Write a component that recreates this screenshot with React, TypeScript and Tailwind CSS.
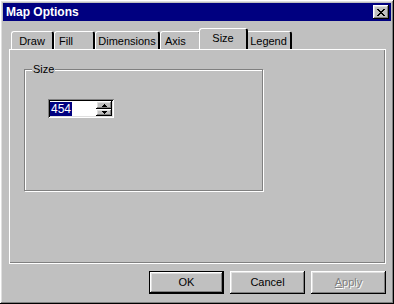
import React from "react";

const raised =
  "shadow-[inset_-1px_-1px_#000,inset_1px_1px_#fff,inset_-2px_-2px_#808080,inset_2px_2px_#dfdfdf]";

const Tab = ({ label, w, active }: { label: string; w: string; active?: boolean }) => (
  <div
    className={`relative flex justify-center bg-[#c0c0c0] border-t border-l border-white rounded-tl-[3px] rounded-tr-[3px] border-r-2 border-r-black ${w} ${
      active ? "h-[21px] -mx-[2px] z-10 pt-[2px]" : "h-[18px] pt-[2px]"
    }`}
  >
    <span className="leading-[14px]">{label}</span>
  </div>
);

const Button = ({ label, def, disabled }: { label: string; def?: boolean; disabled?: boolean }) => (
  <div
    className={`w-[75px] h-[23px] flex items-center justify-center ${
      def ? "border border-black" : ""
    }`}
  >
    <div className={`w-full h-full flex items-center justify-center ${raised}`}>
      {disabled ? (
        <span className="text-[#808080] [text-shadow:1px_1px_#fff]">
          <u>A</u>pply
        </span>
      ) : (
        <span>{label}</span>
      )}
    </div>
  </div>
);

export default function App() {
  return (
    <div
      className={`w-[394px] h-[304px] bg-[#c0c0c0] p-[3px] text-[11px] text-black ${raised}`}
      style={{ fontFamily: '"Liberation Sans", Arial, sans-serif' }}
    >
      {/* title bar */}
      <div className="h-[18px] bg-[#000080] flex items-center justify-between pl-[3px] pr-[2px]">
        <span className="text-white font-bold text-[12px] leading-none">Map Options</span>
        <div className={`w-[16px] h-[14px] bg-[#c0c0c0] flex items-center justify-center ${raised}`}>
          <svg width="8" height="7" viewBox="0 0 8 7" shapeRendering="crispEdges">
            <path d="M0 0h2v1h-2zM6 0h2v1h-2zM1 1h2v1h-2zM5 1h2v1h-2zM2 2h4v1h-4zM3 3h2v1h-2zM2 4h4v1h-4zM1 5h2v1h-2zM5 5h2v1h-2zM0 6h2v1h-2zM6 6h2v1h-2z" fill="#000" />
          </svg>
        </div>
      </div>

      {/* tabs */}
      <div className="flex items-end h-[20px] mt-[8px] ml-[8px]">
        <Tab label="Draw" w="w-[43px]" />
        <Tab label="Fill" w="w-[41px] justify-start pl-[4px]" />
        <Tab label="Dimensions" w="w-[65px]" />
        <Tab label="Axis" w="w-[41px] justify-start pl-[4px]" />
        <Tab label="Size" w="w-[49px]" active />
        <Tab label="Legend" w="w-[46px]" />
      </div>

      {/* panel */}
      <div className="ml-[6px] w-[377px] h-[215px] border-t border-l border-white border-r border-b border-black shadow-[inset_-1px_-1px_#808080] pt-[19px] pl-[14px]">
        <div className="relative w-[239px] h-[122px] border border-[#808080] shadow-[1px_1px_#fff,inset_1px_1px_#fff]">
          <span className="absolute -top-[8px] left-[7px] px-[1px] bg-[#c0c0c0] leading-[14px]">Size</span>
          <div className="ml-[23px] mt-[29px] w-[66px] h-[19px] bg-white flex items-center shadow-[inset_1px_1px_#808080,inset_-1px_-1px_#fff,inset_2px_2px_#000,inset_-2px_-2px_#dfdfdf] pl-[2px] pr-[2px]">
            <span className="bg-[#000080] text-white text-[12px] leading-[14px] px-[1px]">454</span>
            <div className="ml-auto flex flex-col gap-0">
              <div className={`w-[16px] h-[8px] bg-[#c0c0c0] flex items-center justify-center ${raised}`}>
                <svg width="5" height="3" viewBox="0 0 5 3" shapeRendering="crispEdges">
                  <path d="M2 0h1v1h-1zM1 1h3v1h-3zM0 2h5v1h-5z" fill="#000" />
                </svg>
              </div>
              <div className={`w-[16px] h-[7px] bg-[#c0c0c0] flex items-center justify-center ${raised}`}>
                <svg width="5" height="3" viewBox="0 0 5 3" shapeRendering="crispEdges">
                  <path d="M0 0h5v1h-5zM1 1h3v1h-3zM2 2h1v1h-1z" fill="#000" />
                </svg>
              </div>
            </div>
          </div>
        </div>
      </div>

      {/* buttons */}
      <div className="flex justify-end gap-[6px] mt-[7px] pr-[5px]">
        <Button label="OK" def />
        <Button label="Cancel" />
        <Button label="Apply" disabled />
      </div>
    </div>
  );
}
